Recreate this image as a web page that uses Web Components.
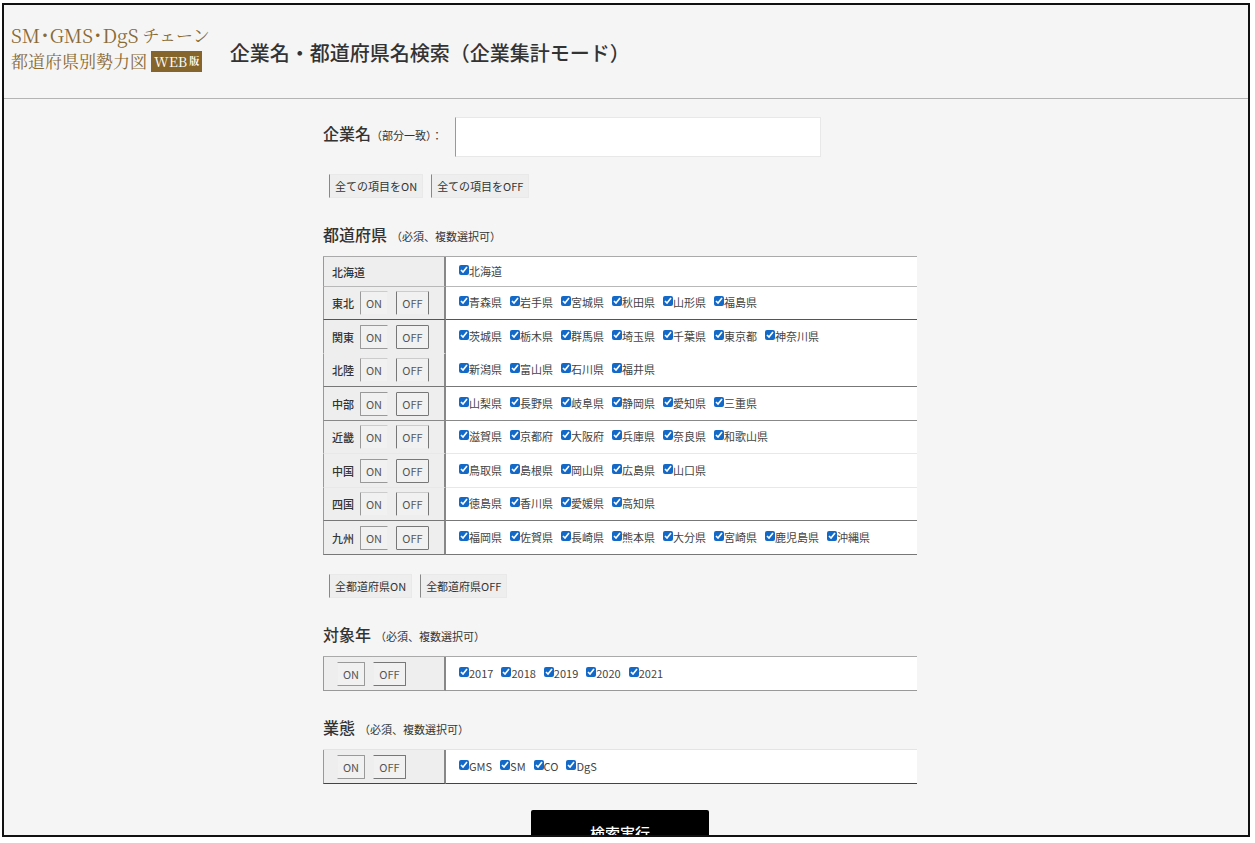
<!DOCTYPE html>
<html lang="ja">
<head>
<meta charset="utf-8">
<meta name="viewport" content="width=device-width, initial-scale=1">
<title>企業名・都道府県名検索（企業集計モード）</title>
<style>
  body {
    margin: 0;
    background: #fff;
    color: #333;
    font: 11px/16px "Noto Sans CJK JP", "Noto Sans", sans-serif;
  }
</style>
</head>
<body>
<search-page>
  <page-header slot="header">
    <brand-logo slot="logo"></brand-logo>
    企業名・都道府県名検索（企業集計モード）
  </page-header>
  <company-field></company-field>
  <button-bar>
    <flat-button>全ての項目をON</flat-button>
    <flat-button>全ての項目をOFF</flat-button>
  </button-bar>
  <section-heading note="（必須、複数選択可）">都道府県</section-heading>
  <choice-table data-set="prefectures"></choice-table>
  <button-bar class="after-table">
    <flat-button>全都道府県ON</flat-button>
    <flat-button>全都道府県OFF</flat-button>
  </button-bar>
  <section-heading note="（必須、複数選択可）">対象年</section-heading>
  <choice-table data-set="years"></choice-table>
  <section-heading note="（必須、複数選択可）">業態</section-heading>
  <choice-table data-set="formats"></choice-table>
  <submit-button>検索実行</submit-button>
</search-page>

<script>
const define = (name, html, setup) => {
  const template = document.createElement('template');
  template.innerHTML = html;
  customElements.define(name, class extends HTMLElement {
    constructor() {
      super();
      this.attachShadow({ mode: 'open' }).append(template.content.cloneNode(true));
    }
    connectedCallback() {
      if (setup && !this.ready) { this.ready = true; setup(this, this.shadowRoot); }
    }
  });
};

define('search-page', `
  <style>
    :host { display: block; box-sizing: border-box; height: calc(100vh - 9px); margin: 3px 5px 6px 2px;
      border: 2px solid #111; background: #f5f5f5; overflow: hidden; }
    main { box-sizing: border-box; max-width: 606px; margin: 0 auto; padding: 18px 12px 0 0; }
  </style>
  <slot name="header"></slot>
  <main><slot></slot></main>`);

define('page-header', `
  <style>
    :host { display: block; border-bottom: 1px solid #b4b4b4; }
    header { display: flex; align-items: center; gap: 20px; padding: 17px 7px 24px; }
    h1 { margin: 9px 0 0; font-size: 20px; line-height: 30px; font-weight: 500; color: #333; }
  </style>
  <header><slot name="logo"></slot><h1><slot></slot></h1></header>`);

define('brand-logo', `
  <style>
    :host { display: block; color: #8a6a34; font: 17px/26px "Noto Serif CJK JP", "Liberation Serif", "Noto Sans CJK JP", serif; white-space: nowrap; }
    .latin { font-size: 19px; font-feature-settings: "halt"; }
    .line { display: flex; align-items: center; height: 26px; }
    .latin + .kana { margin-left: 4px; }
    .badge { display: flex; align-items: center; gap: 2px; height: 21px; margin-left: 4px; padding: 0 3px;
      background: #86652c; color: #fff; font-size: 14px; }
    small { font-size: 10px; font-weight: 700; }
  </style>
  <div class="line"><span class="latin">SM・GMS・DgS</span><span class="kana">チェーン</span></div>
  <div class="line"><span>都道府県別勢力図</span><span class="badge">WEB<small>版</small></span></div>`);

define('company-field', `
  <style>
    :host { display: block; }
    div { display: flex; align-items: flex-start; }
    label { display: flex; align-items: baseline; width: 132px; padding-top: 4px; white-space: nowrap; }
    b { font-size: 16px; line-height: 24px; font-weight: 500; }
    input { box-sizing: border-box; flex: 0 1 366px; min-width: 0; height: 40px; margin: 0; padding: 0 8px;
      border: 1px solid #e8e8e8; border-left-color: #999; background: #fff; font: inherit; outline: 0; }
  </style>
  <div><label for="company"><b>企業名</b><span>（部分一致）：</span></label><input id="company" type="text"></div>`);

define('section-heading', `
  <style>
    :host { display: block; margin: 24px 0 8px; }
    h2 { display: flex; align-items: baseline; gap: 4px; margin: 0; font-size: 16px; line-height: 24px; font-weight: 500; }
    small { font-size: 11px; font-weight: 400; }
  </style>
  <h2><slot></slot><small></small></h2>`,
  (host, root) => { root.querySelector('small').textContent = host.getAttribute('note'); });

define('button-bar', `
  <style>
    :host { display: flex; gap: 8px; margin: 17px 0 0 6px; }
    :host(.after-table) { margin-top: 19px; }
  </style>
  <slot></slot>`);

define('flat-button', `
  <style>
    :host { display: block; }
    button { display: block; box-sizing: border-box; height: 24px; margin: 0; padding: 0 5px;
      border: 1px solid #e9e9e9; border-left-color: #888; background: #eee; color: inherit; font: inherit; line-height: 22px; }
  </style>
  <button type="button"><slot></slot></button>`);

define('mini-button', `
  <style>
    :host { display: block; }
    button { display: block; box-sizing: border-box; width: 28px; height: 24px; margin: 0; padding: 0;
      border: 1px solid #999; border-radius: 1px; background: #f1f1f1; color: #555; font: inherit; line-height: 20px; }
    :host(.wide) button { width: 33px; border-color: #777; }
    :host(.open-right) button { border-right-color: #eee; }
    :host(.open-bottom) button { border-bottom-color: #eee; border-top-color: #ccc; }
    :host(.open-left) button { border-left-color: #eee; }
  </style>
  <button type="button"><slot></slot></button>`);

define('check-item', `
  <style>
    :host { display: block; }
    label { display: flex; align-items: center; color: #444; white-space: nowrap; }
    input { width: 10px; height: 10px; margin: 0 0 2px; accent-color: #1269c7; }
  </style>
  <label><input type="checkbox" checked><slot></slot></label>`);

define('submit-button', `
  <style>
    :host { display: flex; justify-content: center; margin-top: 26px; }
    button { width: 178px; height: 45px; margin: 0; padding: 0; border: 0; border-radius: 2px; background: #000; color: #fff;
      font: 500 15px/24px "Noto Sans CJK JP", sans-serif; }
  </style>
  <button type="submit"><slot></slot></button>`);

/* Each row: [region, items, colour of the rule below it] */
const data = {
  prefectures: [
    ['北海道', '北海道', '#b8b8b8'],
    ['東北', '青森県 岩手県 宮城県 秋田県 山形県 福島県', '#555'],
    ['関東', '茨城県 栃木県 群馬県 埼玉県 千葉県 東京都 神奈川県', 'transparent'],
    ['北陸', '新潟県 富山県 石川県 福井県', '#777'],
    ['中部', '山梨県 長野県 岐阜県 静岡県 愛知県 三重県', '#888'],
    ['近畿', '滋賀県 京都府 大阪府 兵庫県 奈良県 和歌山県', '#e8e8e8'],
    ['中国', '鳥取県 島根県 岡山県 広島県 山口県', '#e8e8e8'],
    ['四国', '徳島県 香川県 愛媛県 高知県', '#777'],
    ['九州', '福岡県 佐賀県 長崎県 熊本県 大分県 宮崎県 鹿児島県 沖縄県', '#777']
  ],
  years: [['', '2017 2018 2019 2020 2021', '#999']],
  formats: [['', 'GMS SM CO DgS', '#444']]
};

define('choice-table', `
  <style>
    :host { display: block; }
    table { width: 100%; border-spacing: 0; border-top: 1px solid #aaa; background: #fff; table-layout: fixed; }
    :host([data-set="formats"]) table { border-top-color: #e4e4e4; }
    th, td { box-sizing: border-box; height: 34px; padding: 0; border-bottom: 1px solid var(--rule); font-weight: 400; text-align: left; }
    tr:nth-child(even) > * { height: 33px; }
    tr.plain > * { height: 30px; }
    th { width: 123px; padding-left: 8px; border-left: 1px solid #999; border-right: 2px solid #888; background: #eee; }
    td { padding: 0 0 2px 13px; }
    .head { display: flex; align-items: center; gap: 8px; }
    .head b { font-weight: 500; }
    .head b + mini-button { margin-left: -2px; }
    .head.bare { padding-left: 5px; }
    .items { display: flex; flex-wrap: wrap; gap: 0 8px; }
  </style>
  <table><tbody></tbody></table>`,
  (host, root) => {
    const body = root.querySelector('tbody');
    data[host.dataset.set].forEach(([name, items, rule], i) => {
      const row = document.createElement('tr');
      row.style.setProperty('--rule', rule);
      const plain = name === '北海道';
      if (plain) row.className = 'plain';
      const open = name ? (i % 2 ? 'open-bottom' : '') : 'open-left';
      const onSide = name ? 'open-right' : '';
      row.innerHTML = `
        <th scope="row"><div class="head ${name ? '' : 'bare'}">${name ? `<b>${name}</b>` : ''}${plain ? '' :
          `<mini-button class="${onSide} ${open}">ON</mini-button><mini-button class="wide ${open}">OFF</mini-button>`}</div></th>
        <td><div class="items">${items.split(' ').map(t => `<check-item>${t}</check-item>`).join('')}</div></td>`;
      body.append(row);
    });
  });
</script>
</body>
</html>
